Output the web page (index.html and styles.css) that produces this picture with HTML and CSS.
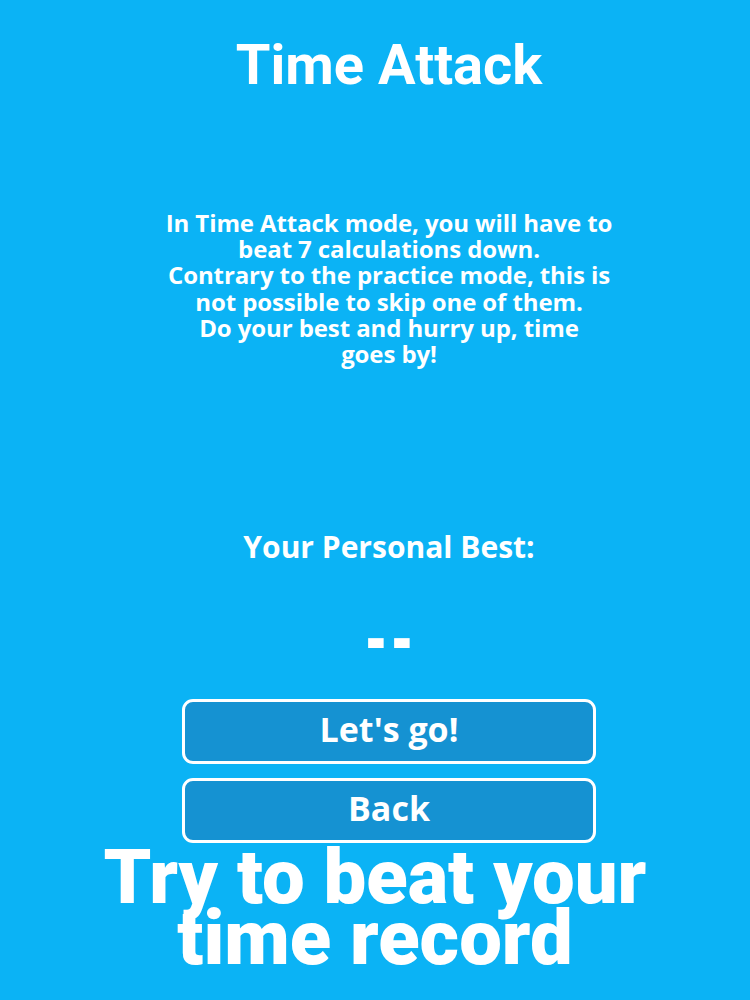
FILE: index.html
```html
<!DOCTYPE html>
<html>
<head>
<meta charset="utf-8">
<link rel="stylesheet" href="styles.css">
</head>
<body>
<div class="screen">
  <div class="main">
    <h1 class="title">Time Attack</h1>
    <p class="desc">In Time Attack mode, you will have to<br>beat 7 calculations down.<br>Contrary to the practice mode, this is<br>not possible to skip one of them.<br>Do your best and hurry up, time<br>goes by!</p>
    <div class="best-label">Your Personal Best:</div>
    <div class="best-value"><span>--</span></div>
    <div class="buttons">
      <div class="btn">Let's go!</div>
      <div class="btn">Back</div>
    </div>
  </div>
  <div class="promo">Try to beat your<br>time record</div>
</div>
</body>
</html>
```
FILE: styles.css
```css
html, body {
  margin: 0;
  padding: 0;
}
body {
  background: #0bb3f5;
  font-family: Roboto, "Noto Sans", sans-serif;
  font-weight: 700;
  color: #ffffff;
}
.screen {
  display: flex;
  flex-direction: column;
  align-items: center;
  height: 1000px;
  overflow: hidden;
  text-align: center;
}
.main {
  align-self: stretch;
  padding-left: 28px;
  display: flex;
  flex-direction: column;
  align-items: center;
}
.title {
  margin: 33px 0 0;
  font-size: 56px;
  line-height: 64px;
  font-weight: 700;
}
.desc {
  margin: 113px 0 0;
  font-family: "Open Sans", Roboto, sans-serif;
  font-size: 24px;
  line-height: 26.2px;
  letter-spacing: -0.1px;
}
.best-label {
  margin-top: 163px;
  font-family: "Open Sans", Roboto, sans-serif;
  font-size: 30px;
  line-height: 34px;
}
.best-value {
  margin-top: 56px;
  height: 40px;
  font-size: 56px;
  line-height: 40px;
  letter-spacing: 4px;
}
.best-value span {
  display: inline-block;
  transform: scaleY(1.6);
  padding-left: 4px;
}
.buttons {
  margin-top: 39px;
  display: flex;
  flex-direction: column;
  gap: 14px;
}
.btn {
  box-sizing: border-box;
  width: 414px;
  height: 65px;
  border: 3px solid #ffffff;
  border-radius: 11px;
  background: #1592d2;
  font-family: "Open Sans", Roboto, sans-serif;
  font-size: 34px;
  line-height: 54px;
}
.promo {
  margin-top: 4px;
  font-size: 76px;
  line-height: 61px;
  font-weight: 900;
}
```
